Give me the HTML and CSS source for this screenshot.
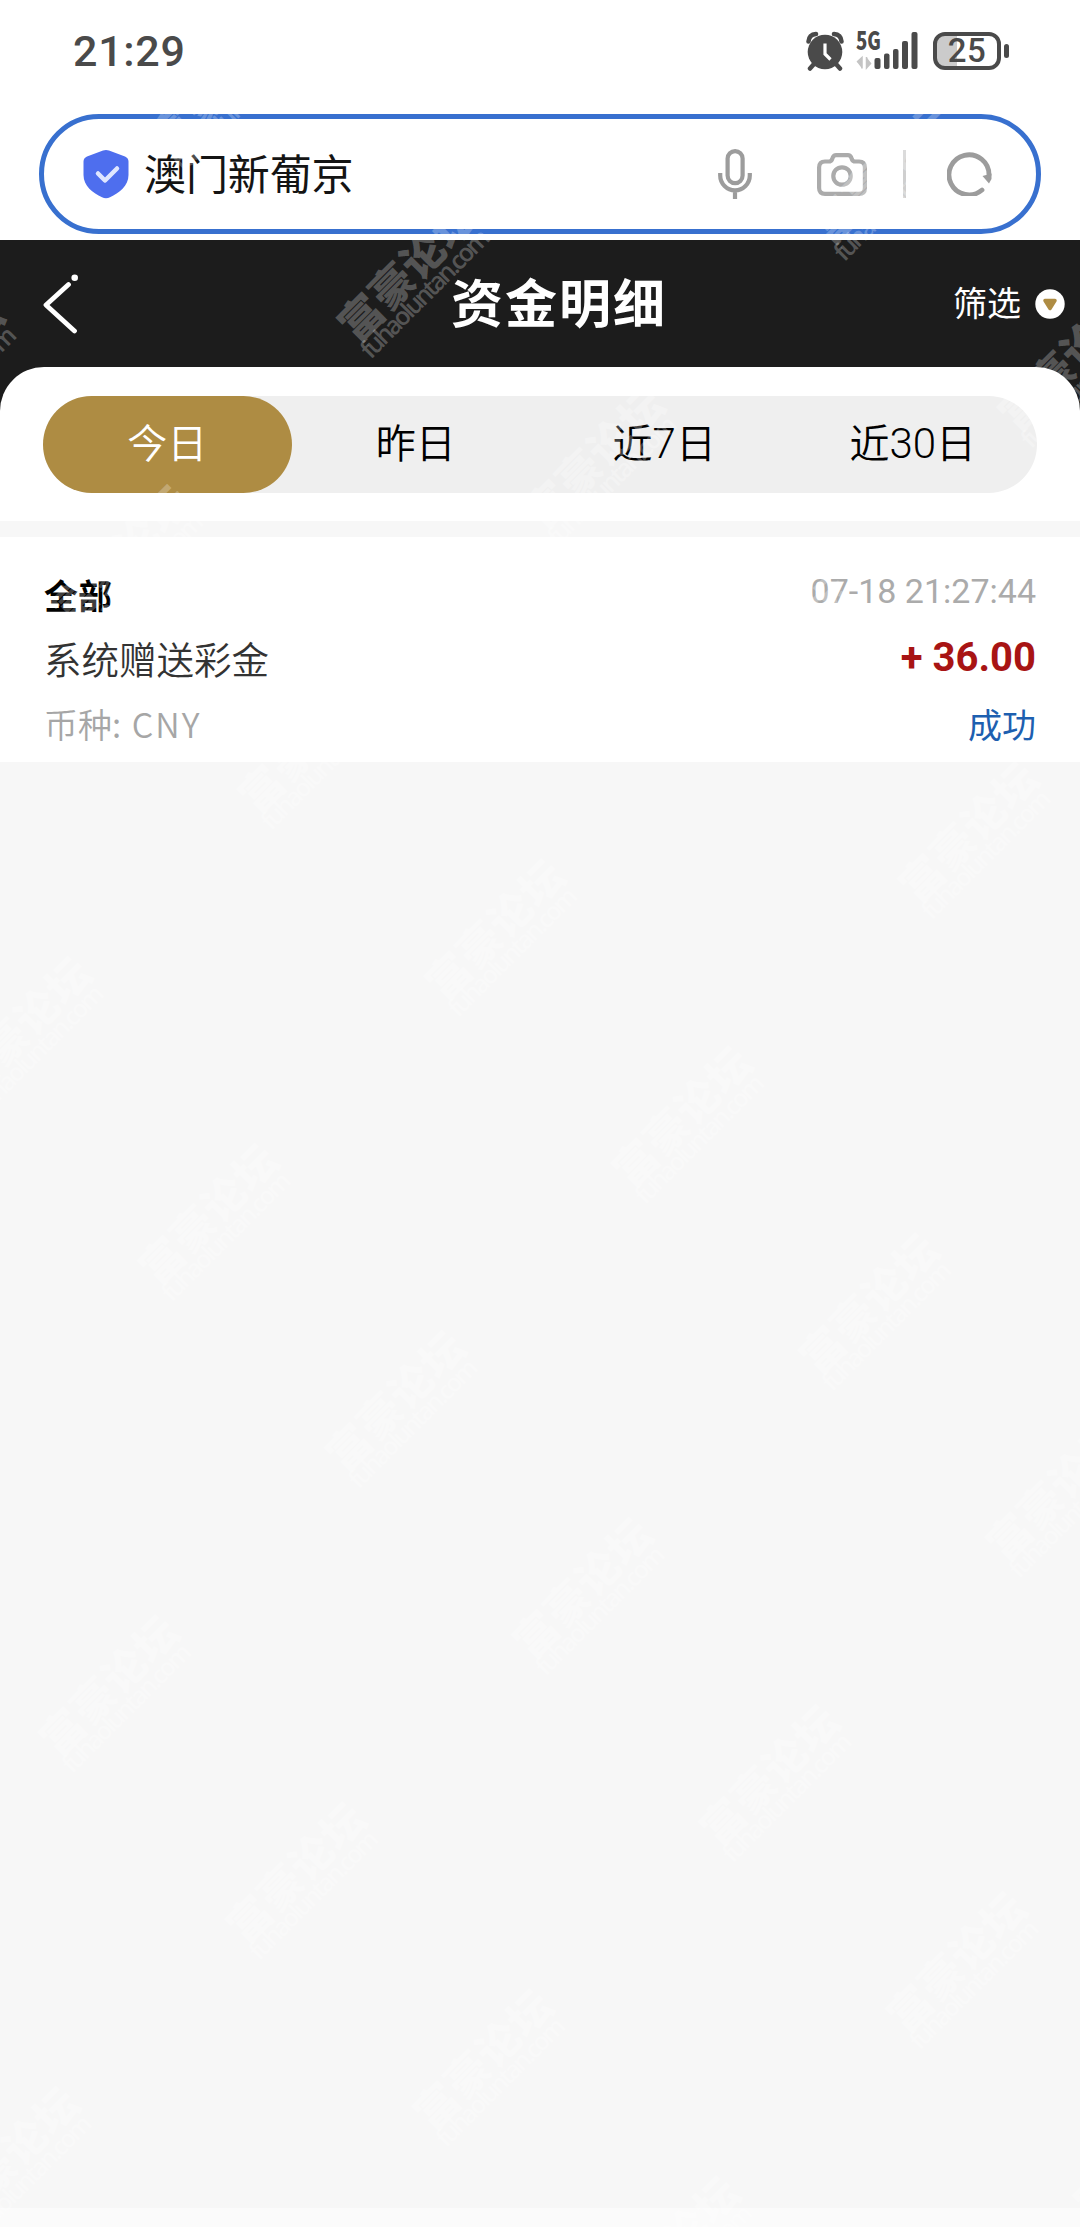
FILE: index.html
```html
<!DOCTYPE html>
<html lang="zh-CN">
<head>
    <meta charset="UTF-8">
    <meta name="viewport" content="width=device-width, initial-scale=1.0">
    <title>资金明细</title>
    <link rel="stylesheet" href="styles.css">
</head>
<body>
    <div class="status">
        <p class="clock">21:29</p>
        <div class="status-icons">
            <svg class="alarm" width="38" height="40" viewBox="0 0 38 40">
                <circle cx="19" cy="21" r="17.3" fill="#4a4a4a"/>
                <path d="M2.500 10.500Q3 3.500 10 3M35.500 10.500Q35 3.500 28 3M8 33l-4 4.500M30 33l4 4.500" fill="none" stroke="#4a4a4a" stroke-width="4.500" stroke-linecap="round"/>
                <path d="M19 12.500v10.500l5.500 5.500" fill="none" stroke="#fff" stroke-width="3.200"/>
            </svg>
            <svg class="signal" width="62" height="40" viewBox="0 0 62 40">
                <text class="net" x="0" y="19" textLength="25" lengthAdjust="spacingAndGlyphs">5G</text>
                <path d="M1 31l5-4.500v11M15 32l-4.500 5V26" fill="#c4c4c4" stroke="#c4c4c4" stroke-width="1.500"/>
                <g fill="#4a4a4a">
                    <rect x="18.500" y="27" width="6" height="11" rx="2"/>
                    <rect x="28" y="22.500" width="5.500" height="15.500" rx="2"/>
                    <rect x="37" y="18" width="5.500" height="20" rx="2"/>
                    <rect x="46" y="10" width="6" height="28" rx="2"/>
                    <rect x="55.500" y="1" width="6" height="37" rx="2"/>
                </g>
            </svg>
            <div class="battery"><span>25</span></div>
            <i class="battery-tip"></i>
        </div>
    </div>

    <div class="search">
        <svg width="46" height="50" viewBox="0 0 46 50">
            <path d="M20 1.500Q23 .3 26 1.500L42 7.500Q45.500 9 45.500 12.500V26C45.500 37 36 44 27 48.300Q23 50 19 48.300C10 44 .5 37 .5 26V12.500Q.5 9 4 7.500Z" fill="#4e6eee"/>
            <path d="M15 24.500l7 7L34 19.500" fill="none" stroke="#dfe6ff" stroke-width="4.500" stroke-linecap="round" stroke-linejoin="round"/>
        </svg>
        <p class="site">澳门新葡京</p>
        <svg class="mic" width="34" height="50" viewBox="0 0 34 50">
            <g fill="none" stroke="#9c9c9c" stroke-width="4.200">
                <rect x="9.600" y="2.100" width="15" height="32" rx="7.500"/>
                <path d="M2.200 24v2.500a14.800 14.800 0 0 0 29.600 0V24M17 41.500V50"/>
            </g>
        </svg>
        <svg class="camera" width="50" height="43" viewBox="0 0 50 43">
            <g fill="none" stroke="#ababab" stroke-width="4.200" stroke-linejoin="round">
                <path d="M8 8.500H12Q14 8.500 15 6.500L16 4Q17 2.100 19 2.100H31Q33 2.100 34 4L35 6.500Q36 8.500 38 8.500H42Q47.900 8.500 47.900 14.500V35Q47.900 40.900 42 40.900H8Q2.100 40.900 2.100 35V14.500Q2.100 8.500 8 8.500Z"/>
                <circle cx="25" cy="23" r="8.700"/>
            </g>
        </svg>
        <i class="line"></i>
        <svg class="reload" width="46" height="44" viewBox="0 0 46 44">
            <path d="M35 38A20 20 0 1 1 42 23" fill="none" stroke="#9c9c9c" stroke-width="4.800" stroke-linecap="round"/>
            <path d="M35.500 24L44.500 21.500V27L42 31.500Z" fill="#9c9c9c"/>
        </svg>
    </div>

    <div class="header">
        <svg width="36" height="60" viewBox="0 0 36 60">
            <path d="M26.500 10.500L4 31L32.500 57" fill="none" stroke="#fff" stroke-width="4.800" stroke-linecap="round" stroke-linejoin="round"/>
            <circle cx="32.700" cy="3.700" r="3.300" fill="#fff"/>
        </svg>
        <h1>资金明细</h1>
        <div class="filter">
            <span>筛选</span>
            <svg width="30" height="30" viewBox="0 0 30 30">
                <circle cx="15" cy="15" r="14.700" fill="#fff"/>
                <path d="M10 11.500H20L15 19.500Z" fill="#ae8c43" stroke="#ae8c43" stroke-width="3.500" stroke-linejoin="round"/>
            </svg>
        </div>
    </div>

    <div class="sheet">
        <div class="tabs">
            <p class="tab active">今日</p>
            <p class="tab">昨日</p>
            <p class="tab">近<span>7</span>日</p>
            <p class="tab">近<span>30</span>日</p>
        </div>
    </div>

    <div class="record">
        <div class="row">
            <p class="type">全部</p>
            <p class="time">07-18 21:27:44</p>
        </div>
        <div class="row">
            <p class="desc">系统赠送彩金</p>
            <p class="amount">+ 36.00</p>
        </div>
        <div class="row">
            <p class="currency">币种: <span>CNY</span></p>
            <p class="state">成功</p>
        </div>
    </div>
    <div class="empty"></div>

    <svg class="watermark" width="1080" height="2227" viewBox="0 0 1080 2227"></svg>

    <script>
        const watermark = document.querySelector(".watermark")
        let marks = ""

        // slanted grid, each step goes right-down or left-down
        for(let n = -5; n <= 6; n++){
            for(let m = -8; m <= 9; m++){
                const x = 420 + m * 187 - n * 286.5
                const y = 976 + m * 187 + n * 284.5
                if(x > -150 && x < 1070 && y > 54 && y < 2330){
                    marks += `<g transform="translate(${x} ${y}) rotate(-45)">
                        <text class="mark" x="-1" y="36" textLength="174">富豪论坛</text>
                        <text class="mark-url" x="-3" y="57" textLength="171">fuhaoluntan.com</text>
                    </g>`
                }
            }
        }
        watermark.innerHTML = marks
    </script>
</body>
</html>
```
FILE: styles.css
```css
*{
    margin: 0;
    padding: 0;
    box-sizing: border-box;
    font-family: "Noto Sans CJK SC", sans-serif;
}

body{
    position: relative;
    display: flex;
    flex-direction: column;
    height: 2227px;
    overflow: hidden;
    background-color: #fff;
}

svg{
    flex-shrink: 0;
}

.status{
    display: flex;
    justify-content: space-between;
    align-items: center;
    height: 102px;
    padding: 0 71px 0 73px;
}

.clock{
    font-family: Roboto, sans-serif;
    font-size: 43px;
    font-weight: 500;
    letter-spacing: 0.7px;
    color: #4a4a4a;
    line-height: 60px;
}

.status-icons{
    display: flex;
    align-items: center;
}

.signal{
    margin: 0 15px 0 12px;
    overflow: visible;
}

.net{
    font-size: 25px;
    font-weight: 900;
    fill: #4a4a4a;
}

.battery{
    width: 68px;
    height: 38px;
    border: 4px solid #4a4a4a;
    border-radius: 12px;
    background: linear-gradient(to right, #cbcbcb 20px, #fff 20px);
    text-align: center;
}

.battery span{
    display: block;
    font-family: Roboto, sans-serif;
    font-size: 33px;
    font-weight: 500;
    line-height: 30px;
    letter-spacing: 0.5px;
    color: #4a4a4a;
}

.battery-tip{
    width: 5px;
    height: 14px;
    margin-left: 3px;
    border-radius: 3px;
    background-color: #4a4a4a;
}

.search{
    display: flex;
    align-items: center;
    height: 120px;
    margin: 12px 39px 6px;
    padding: 0 43px 0 39px;
    border: 5px solid #3870cf;
    border-radius: 60px;
}

.site{
    flex-grow: 1;
    margin-left: 15px;
    font-size: 42px;
    line-height: 60px;
    letter-spacing: -0.1px;
    color: #141414;
    margin-bottom: 4px;
}

.camera{
    margin: 0 36px 0 65px;
}

.line{
    width: 3px;
    height: 48px;
    margin-right: 41px;
    background-color: #cfcfcf;
}

.header{
    display: flex;
    align-items: center;
    justify-content: space-between;
    height: 171px;
    padding: 0 15px 44px 42px;
    background-color: #1c1c1c;
    color: #fff;
}

.header h1{
    margin: 0 0 5px 87px;
    font-size: 52px;
    font-weight: 700;
    line-height: 76px;
    letter-spacing: 2px;
}

.filter{
    display: flex;
    align-items: center;
    gap: 14px;
    font-size: 34px;
    line-height: 50px;
}

.filter span{
    margin-bottom: 3px;
}

.sheet{
    height: 154px;
    margin-top: -44px;
    padding: 29px 43px;
    border-radius: 44px 44px 0 0;
    background-color: #fff;
}

.tabs{
    display: flex;
    height: 97px;
    border-radius: 49px;
    background-color: #efefef;
}

.tab{
    flex: 1;
    border-radius: 49px;
    font-size: 40px;
    font-weight: 350;
    line-height: 90px;
    text-align: center;
    color: #000;
}

.tab span{
    font-family: Roboto, sans-serif;
    font-size: 42px;
    line-height: 1;
}

.tab.active{
    background-color: #ae8c43;
    color: #fff;
}

.record{
    height: 241px;
    padding: 32px 44px 0;
    border-top: 16px solid #f7f7f7;
}

.row{
    display: flex;
    justify-content: space-between;
    align-items: flex-start;
}

.type{
    font-size: 34px;
    font-weight: 700;
    line-height: 51px;
}

.time{
    font-family: Roboto, sans-serif;
    font-size: 34px;
    line-height: 45px;
    color: #ababab;
}

.desc{
    font-size: 37.500px;
    font-weight: 350;
    line-height: 76px;
    color: #333;
}

.amount{
    font-family: Roboto, sans-serif;
    font-size: 40px;
    font-weight: 700;
    line-height: 75px;
    color: #a81414;
}

.currency{
    font-size: 34px;
    font-weight: 350;
    line-height: 55px;
    color: #a6a6a6;
}

.currency span{
    margin-left: 3px;
    letter-spacing: 2px;
}

.state{
    font-size: 34px;
    line-height: 55px;
    color: #1d5fb0;
}

.empty{
    flex-grow: 1;
    background-color: #f7f7f7;
    border-bottom: 19px solid #fbfbfb;
}

.watermark{
    position: absolute;
    top: 0;
    left: 0;
    pointer-events: none;
}

.mark{
    font-size: 43px;
    font-weight: 900;
    fill: rgba(255, 255, 255, 0.26);
}

.mark-url{
    font-family: "Open Sans", sans-serif;
    font-size: 25px;
    font-weight: 600;
    fill: rgba(255, 255, 255, 0.26);
}
```
